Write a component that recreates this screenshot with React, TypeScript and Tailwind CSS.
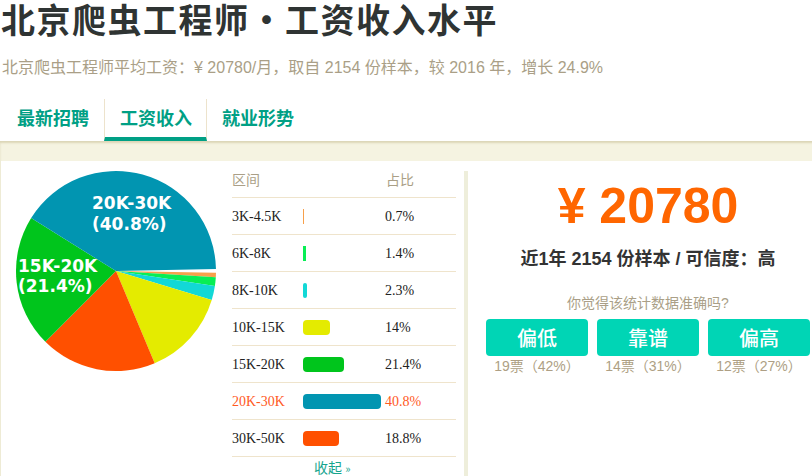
import React from "react";

type Row = { label: string; pct: number; color: string; hl?: boolean };

const rows: Row[] = [
  { label: "3K-4.5K", pct: 0.7, color: "#f7a04b" },
  { label: "6K-8K", pct: 1.4, color: "#08ee55" },
  { label: "8K-10K", pct: 2.3, color: "#12d8d6" },
  { label: "10K-15K", pct: 14, color: "#e4eb00" },
  { label: "15K-20K", pct: 21.4, color: "#00c51c" },
  { label: "20K-30K", pct: 40.8, color: "#0195b1", hl: true },
  { label: "30K-50K", pct: 18.8, color: "#ff5000" },
];

const pieOrder = ["3K-4.5K", "6K-8K", "8K-10K", "10K-15K", "30K-50K", "15K-20K", "20K-30K"];

function arcPath(cx: number, cy: number, r: number, a0: number, a1: number) {
  const rad = (d: number) => (d * Math.PI) / 180;
  const x0 = cx + r * Math.cos(rad(a0));
  const y0 = cy + r * Math.sin(rad(a0));
  const x1 = cx + r * Math.cos(rad(a1));
  const y1 = cy + r * Math.sin(rad(a1));
  const large = a1 - a0 > 180 ? 1 : 0;
  return `M ${cx} ${cy} L ${x0} ${y0} A ${r} ${r} 0 ${large} 1 ${x1} ${y1} Z`;
}

function Pie() {
  const cx = 115;
  const cy = 110;
  const r = 100;
  let a = 1;
  const paths = pieOrder.map((name) => {
    const row = rows.find((x) => x.label === name)!;
    const a0 = a;
    const a1 = a + row.pct * 3.6;
    a = a1;
    return <path key={name} d={arcPath(cx, cy, r, a0, a1)} fill={row.color} />;
  });
  const lbl = { fontFamily: "'DejaVu Sans', sans-serif", fontWeight: 700, fontSize: 17, fill: "#fff" } as const;
  return (
    <svg width="231" height="220" viewBox="0 0 231 220" className="shrink-0">
      {paths}
      <text x="91" y="48" style={lbl}>20K-30K</text>
      <text x="91" y="69" style={lbl}>(40.8%)</text>
      <text x="17" y="111" style={lbl}>15K-20K</text>
      <text x="17" y="131" style={lbl}>(21.4%)</text>
    </svg>
  );
}

const sans = "font-['Liberation_Sans','Noto_Sans_CJK_SC',sans-serif]";

export default function App() {
  return (
    <div className={`w-[812px] h-[476px] overflow-hidden bg-white ${sans}`}>
      <div className="w-[840px]">
        <h1 className="text-[34px] leading-[38px] font-bold tracking-[1.5px] text-[#2f3433] font-['Noto_Sans_CJK_SC',sans-serif] pl-[1px]">
          北京爬虫工程师・工资收入水平
        </h1>
        <p className="mt-[18px] text-[16px] leading-[24px] text-[#aa9f87] pl-[2px]">
          北京爬虫工程师平均工资：¥ 20780/月，取自 2154 份样本，较 2016 年，增长 24.9%
        </p>
        <div className="mt-[19px] flex h-[42px] font-['Noto_Sans_CJK_SC',sans-serif]">
          <div className="w-[104px] pl-[17px] border-b-4 border-transparent text-[18px] leading-[37px] font-bold text-[#00a085]">
            最新招聘
          </div>
          <div className="w-[103px] pl-[15px] border-x border-[#ede3cc] border-b-4 border-b-[#00a085] text-[18px] leading-[37px] font-bold text-[#00a085]">
            工资收入
          </div>
          <div className="w-[104px] pl-[15px] border-b-4 border-transparent text-[18px] leading-[37px] font-bold text-[#00a085]">
            就业形势
          </div>
        </div>
        <div className="bg-[#f5f3e1] pt-[20px] pl-[1px] shadow-[inset_0_2px_2px_rgba(190,180,130,0.45)]">
          <div className="bg-white flex h-[320px]">
            <div className="flex w-[463px] shrink-0">
              <Pie />
              <div className="w-[224px] font-['Liberation_Serif','Noto_Sans_CJK_SC',serif] text-[14px]">
                <div className="grid grid-cols-[71px_82px_1fr] h-[37px] items-center border-b border-[#efe4cc] text-[#aa9f87] font-['Noto_Sans_CJK_SC',sans-serif]">
                  <span>区间</span>
                  <span></span>
                  <span className="pl-[1px]">占比</span>
                </div>
                {rows.map((row) => (
                  <div
                    key={row.label}
                    className={`grid grid-cols-[71px_82px_1fr] h-[37px] items-center border-b border-[#efe4cc] ${
                      row.hl ? "text-[#ff5a1f]" : "text-[#222]"
                    }`}
                  >
                    <span>{row.label}</span>
                    <span className="flex items-center">
                      <span
                        className="block h-[15px] rounded-[4px]"
                        style={{
                          width: Math.max(1, Math.round(row.pct * 1.91)),
                          background: row.color,
                          borderRadius: row.pct < 2 ? 0 : undefined,
                        }}
                      />
                    </span>
                    <span>{row.pct}%</span>
                  </div>
                ))}
                <div className="pl-[82px] h-[20px] leading-[20px] text-[#17a58e] font-['Noto_Sans_CJK_SC',sans-serif] text-[14px]">
                  收起 <span className="text-[11px]">»</span>
                </div>
              </div>
            </div>
            <div className="w-[4px] mt-[10px] bg-[#eeeedb] shrink-0" />
            <div className="w-[360px] px-[18px] flex flex-col items-center shrink-0">
              <div className="mt-[20px] h-[50px] leading-[50px] text-[50px] font-bold text-[#ff6600] font-['Liberation_Sans',sans-serif]">
                ¥ 20780
              </div>
              <div className="mt-[16px] leading-[24px] text-[18px] font-bold text-[#333]">
                近1年 2154 份样本 / 可信度：高
              </div>
              <div className="mt-[22px] leading-[20px] text-[14px] text-[#aa9f87]">
                你觉得该统计数据准确吗?
              </div>
              <div className="mt-[6px] flex gap-[9px]">
                {[
                  ["偏低", "19票（42%）"],
                  ["靠谱", "14票（31%）"],
                  ["偏高", "12票（27%）"],
                ].map(([t, v]) => (
                  <div key={t} className="w-[102px] flex flex-col items-center">
                    <div className="w-[102px] h-[37px] rounded-[4px] bg-[#00d5b5] text-white text-[20px] leading-[37px] font-medium text-center font-['Noto_Sans_CJK_SC',sans-serif]">
                      {t}
                    </div>
                    <div className="leading-[20px] text-[14px] text-[#ae9f84]">{v}</div>
                  </div>
                ))}
              </div>
            </div>
          </div>
        </div>
      </div>
    </div>
  );
}
